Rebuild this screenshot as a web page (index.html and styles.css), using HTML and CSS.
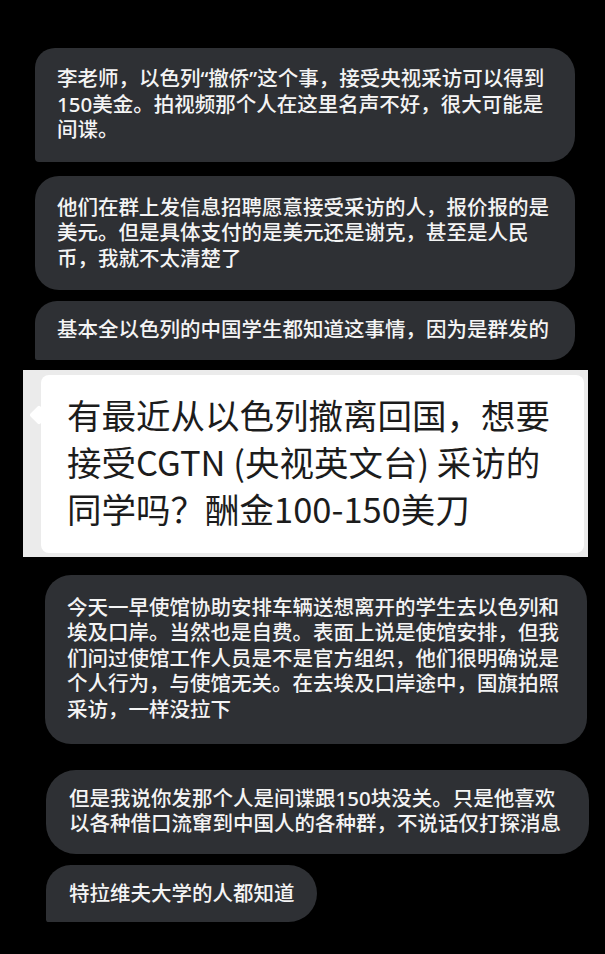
FILE: index.html
```html
<!DOCTYPE html>
<html lang="zh-CN">
<head>
<meta charset="utf-8">
<title>聊天记录</title>
<link rel="stylesheet" href="styles.css">
</head>
<body>
<main class="chat">
  <div class="bubble b1">李老师，以色列“撤侨”这个事，接受央视采访可以得到150美金。拍视频那个人在这里名声不好，很大可能是间谍。</div>
  <div class="bubble b2">他们在群上发信息招聘愿意接受采访的人，报价报的是美元。但是具体支付的是美元还是谢克，甚至是人民币，我就不太清楚了</div>
  <div class="bubble b3">基本全以色列的中国学生都知道这事情，因为是群发的</div>
  <section class="quote">
    <div class="quote-bubble">
      <span class="tail"></span>
      <p class="quote-text">有最近从以色列撤离回国，想要接受CGTN (央视英文台) 采访的同学吗？酬金100-150美刀</p>
    </div>
  </section>
  <div class="bubble b4">今天一早使馆协助安排车辆送想离开的学生去以色列和埃及口岸。当然也是自费。表面上说是使馆安排，但我们问过使馆工作人员是不是官方组织，他们很明确说是个人行为，与使馆无关。在去埃及口岸途中，国旗拍照采访，一样没拉下</div>
  <div class="bubble b5">但是我说你发那个人是间谍跟150块没关。只是他喜欢以各种借口流窜到中国人的各种群，不说话仅打探消息</div>
  <div class="bubble b6">特拉维夫大学的人都知道</div>
</main>
</body>
</html>
```
FILE: styles.css
```css
html, body {
  margin: 0;
  padding: 0;
  background: #000;
}

.chat {
  display: flex;
  flex-direction: column;
  align-items: flex-start;
  padding-top: 48px;
  padding-bottom: 20px;
  font-family: "Noto Sans", "Noto Sans CJK SC", sans-serif;
}

.bubble {
  box-sizing: border-box;
  background: #2e3034;
  color: #f4f4f4;
  font-size: 20.5px;
  font-weight: 500;
  line-height: 25.5px;
  padding: 18px 22px;
  border-radius: 24px;
}

.b1 {
  margin-left: 35px;
  width: 540px;
  border-radius: 20px 26px 26px 4px;
  padding-top: 18px;
  padding-bottom: 19px;
}

.b2 {
  margin-left: 35px;
  margin-top: 14px;
  width: 540px;
  border-radius: 24px;
  padding-top: 19px;
  padding-bottom: 19px;
}

.b3 {
  margin-left: 35px;
  margin-top: 11px;
  width: 540px;
  border-radius: 22px 24px 24px 2px;
  padding-top: 16px;
  padding-bottom: 17px;
}

.quote {
  box-sizing: border-box;
  margin-top: 10px;
  margin-left: 23px;
  width: 565px;
  background: #ebebeb;
  padding: 5px 4px 4px 18px;
}

.quote-bubble {
  position: relative;
  background: #fff;
  border-radius: 8px;
  padding: 16px 20px 21px 26px;
}

.tail {
  position: absolute;
  left: -9px;
  top: 33px;
  width: 14px;
  height: 14px;
  background: #fff;
  transform: rotate(45deg);
  border-radius: 2px;
}

.quote-text {
  position: relative;
  margin: 0;
  color: #1c1c1c;
  font-family: "Noto Sans CJK SC", sans-serif;
  font-size: 34.5px;
  line-height: 47px;
}

.b4 {
  margin-left: 45px;
  margin-top: 18px;
  width: 542px;
  border-radius: 26px;
  padding-top: 20px;
  padding-bottom: 21.5px;
}

.b5 {
  margin-left: 46px;
  margin-top: 26px;
  width: 543px;
  border-radius: 30px;
  padding: 16px 22px 17px 23px;
}

.b6 {
  margin-left: 46px;
  margin-top: 11px;
  border-radius: 26px 30px 30px 3px;
  padding: 16px 22px 16px 23px;
}
```
